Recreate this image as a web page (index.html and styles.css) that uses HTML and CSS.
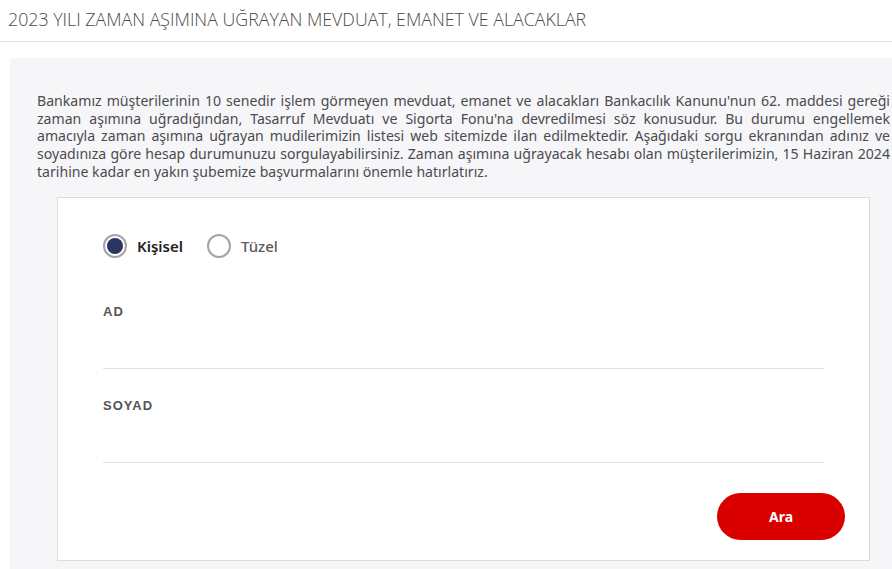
FILE: index.html
```html
<!DOCTYPE html>
<html lang="tr">
<head>
  <meta charset="utf-8">
  <title>Zaman Aşımı Sorgulama</title>
  <link rel="stylesheet" href="styles.css">
</head>
<body>

  <h1 class="page-title">2023 YILI ZAMAN AŞIMINA UĞRAYAN MEVDUAT, EMANET VE ALACAKLAR</h1>

  <div class="panel">
    <p class="intro">Bankamız müşterilerinin 10 senedir işlem görmeyen mevduat, emanet ve alacakları Bankacılık Kanunu'nun 62. maddesi gereği zaman aşımına uğradığından, Tasarruf Mevduatı ve Sigorta Fonu'na devredilmesi söz konusudur. Bu durumu engellemek amacıyla zaman aşımına uğrayan mudilerimizin listesi web sitemizde ilan edilmektedir. Aşağıdaki sorgu ekranından adınız ve soyadınıza göre hesap durumunuzu sorgulayabilirsiniz. Zaman aşımına uğrayacak hesabı olan müşterilerimizin, 15 Haziran 2024 tarihine kadar en yakın şubemize başvurmalarını önemle hatırlatırız.</p>

    <form class="card">
      <div class="radios">
        <label class="radio checked"><span class="dot"></span>Kişisel</label>
        <label class="radio"><span class="dot"></span>Tüzel</label>
      </div>

      <div class="field">
        <label for="ad">AD</label>
        <input type="text" id="ad">
      </div>

      <div class="field">
        <label for="soyad">SOYAD</label>
        <input type="text" id="soyad">
      </div>

      <div class="actions">
        <button type="button">Ara</button>
      </div>
    </form>
  </div>

</body>
</html>
```

FILE: styles.css
```css
body { margin: 0; background: #fff; font-family: "Noto Sans", sans-serif; overflow: hidden; }

.page-title { margin: 0; padding: 8px 8px 0; height: 33px; border-bottom: 1px solid #e4e4e4; font-family: "Open Sans", sans-serif; font-weight: 300; font-size: 17.8px; line-height: 22px; color: #4a4a4a; }

.panel { width: 853px; margin: 16px 0 0 10px; padding: 34px 27px 40px; background: #f6f6f8; }
.intro { margin: 0 0 16px; font-size: 14.1px; line-height: 17.7px; color: #4b4b4f; text-align: justify; }

.card { margin: 0 20px; padding: 36px 45px 20px 45px; background: #fff; border: 1px solid #dcdcdc; }

.radios { display: flex; gap: 24px; height: 24px; }
.radio { display: flex; align-items: center; gap: 10px; font-size: 15px; font-weight: 500; color: #5a5a5e; }
.radio.checked { color: #222; font-weight: 600; }
.dot { width: 20px; height: 20px; border: 2px solid #a3a3a8; border-radius: 50%; position: relative; }
.radio.checked .dot::after { content: ""; position: absolute; left: 2px; top: 2px; width: 16px; height: 16px; border-radius: 50%; background: #2b3561; }

.field { margin-top: 46px; }
.field + .field { margin-top: 29px; }
.field label { display: block; font-size: 13px; line-height: 16px; font-weight: 700; letter-spacing: 1px; color: #555; margin-bottom: 8px; font-family: "Liberation Sans", sans-serif; }
.field input { display: block; width: 100%; height: 41px; box-sizing: border-box; border: none; border-bottom: 1px solid #e3e3e3; outline: none; background: transparent; }

.actions { display: flex; justify-content: flex-end; margin-top: 30px; margin-right: -21px; }
.actions button { width: 128px; height: 47px; border: none; border-radius: 24px; background: #da0000; color: #fff; font-family: inherit; font-size: 14px; font-weight: 700; }
```
